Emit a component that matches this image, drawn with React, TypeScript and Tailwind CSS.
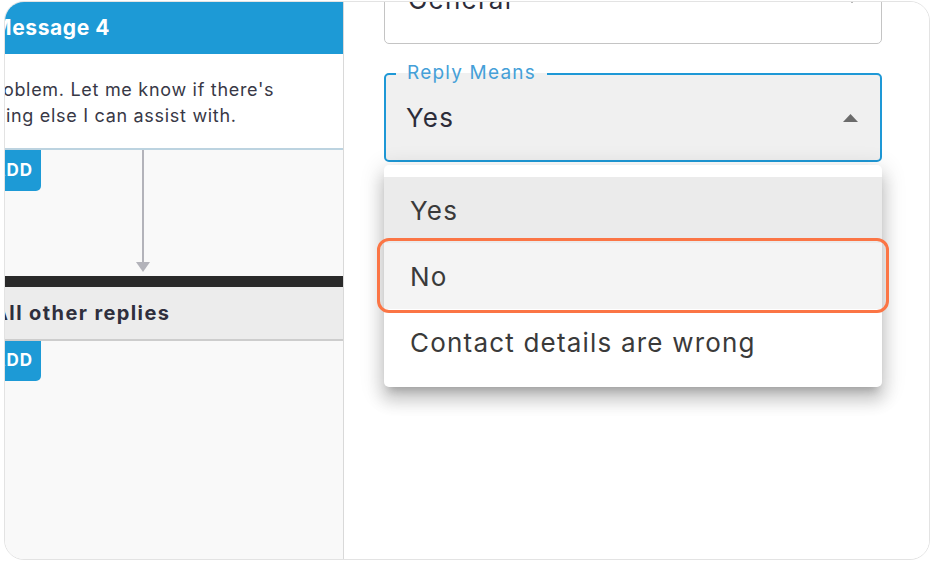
import React from 'react';

const AddButton: React.FC<{ h: string }> = ({ h }) => (
  <div className={`${h} w-[56px] -ml-[20px] shrink-0 flex items-center justify-end pr-[8px] bg-[#1d9ad6] rounded-br-[5px] text-white font-bold text-[17px] tracking-[1px]`}>
    ADD
  </div>
);

const FlowPanel: React.FC = () => (
  <div className="w-[339px] h-full shrink-0 flex flex-col bg-[#f9f9f9] border-r border-[#d9d9d9]">
    <div className="h-[52px] shrink-0 flex items-center bg-[#1d9ad6] text-white font-bold text-[21px] tracking-[0.6px] whitespace-nowrap">
      <span className="-ml-[13px]">Message 4</span>
    </div>
    <div className="h-[96px] shrink-0 flex flex-col justify-center bg-white border-b-2 border-[#bcd3e0] text-[18px] tracking-[0.7px] leading-[26px] text-[#383846] whitespace-nowrap pt-[4px]">
      <span className="-ml-[21px]">problem. Let me know if there's</span>
      <span className="-ml-[50px]">anything else I can assist with.</span>
    </div>
    <div className="h-[126px] shrink-0 flex items-start">
      <AddButton h="h-[41px]" />
      <div className="ml-[95px] flex flex-col items-center">
        <div className="w-[2px] h-[112px] bg-[#b3b3ba]" />
        <svg width="14" height="10" viewBox="0 0 14 10">
          <path d="M0 0 L14 0 L7 10 Z" fill="#b3b3ba" />
        </svg>
      </div>
    </div>
    <div className="h-[11px] shrink-0 bg-[#2a2a2a]" />
    <div className="h-[54px] shrink-0 flex items-center bg-[#ececec] border-b-2 border-[#cdcdcd] font-bold text-[20px] tracking-[1.4px] text-[#2f2f3d] whitespace-nowrap">
      <span className="-ml-[12px]">All other replies</span>
    </div>
    <div className="flex">
      <AddButton h="h-[40px]" />
    </div>
  </div>
);

const SettingsPanel: React.FC = () => (
  <div className="flex-1 bg-white pl-[40px] tracking-[1.2px]">
    <div className="relative w-[498px] h-[89px] -mt-[47px] rounded-[5px] border border-[#c4c4c4] flex items-center pl-[23px] text-[26px] text-[#2d2d3a]">
      General
      <svg className="absolute right-[22px] top-[40px]" width="14" height="7" viewBox="0 0 14 7">
        <path d="M0 0 L14 0 L7 7 Z" fill="#707070" />
      </svg>
    </div>

    <div className="relative w-[498px] h-[89px] mt-[29px] rounded-[5px] border-2 border-[#1e98d6] bg-[#f0f0f0] flex items-center pl-[20px] text-[26px] text-[#2d2d3a]">
      Yes
      <span className="absolute left-[10px] -top-[14px] h-[24px] px-[11px] flex items-center text-[19px] text-[#45a0d8] bg-[linear-gradient(to_bottom,#ffffff_50%,#f0f0f0_50%)]">
        Reply Means
      </span>
      <svg className="absolute right-[22px] top-[39px]" width="15" height="8" viewBox="0 0 15 8">
        <path d="M0 8 L15 8 L7.5 0 Z" fill="#6b6b6b" />
      </svg>
    </div>

    <div className="relative w-[498px] mt-[3px] py-[12px] rounded-[5px] bg-white shadow-[0_8px_8px_-5px_rgba(0,0,0,0.2),0_13px_16px_2px_rgba(0,0,0,0.14),0_5px_22px_4px_rgba(0,0,0,0.12)] text-[26px] text-[#3a3a3a]">
      <div className="h-[66px] flex items-center pl-[26px] bg-[#ebebeb]">Yes</div>
      <div className="h-[66px] flex items-center pl-[26px] bg-[#f4f4f4]">No</div>
      <div className="h-[66px] flex items-center pl-[26px]">Contact details are wrong</div>
      <div className="absolute left-[-7px] top-[73px] w-[512px] h-[75px] rounded-[12px] border-[3px] border-[#fb7545]" />
    </div>
  </div>
);

export default function App() {
  return (
    <div className="w-[934px] h-[565px] bg-white pl-[4px] pt-[1px] font-['Inter',sans-serif]">
      <div className="w-[926px] h-[559px] rounded-[20px] border border-[#e3e3e3] overflow-hidden flex">
        <FlowPanel />
        <SettingsPanel />
      </div>
    </div>
  );
}
